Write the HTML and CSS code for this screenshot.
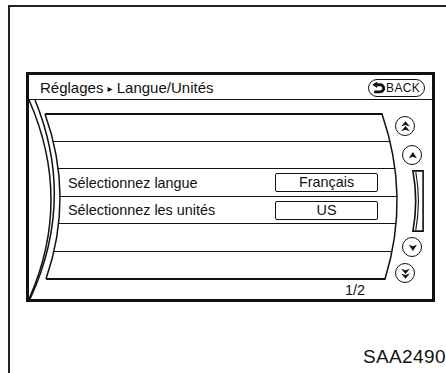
FILE: index.html
```
<!DOCTYPE html>
<html lang="fr">
<head>
    <meta charset="UTF-8">
    <meta name="viewport" content="width=device-width, initial-scale=1.0">
    <title>Réglages - Langue/Unités</title>
    <link rel="stylesheet" href="styles.css">
</head>
<body>
    <div class="figure">
        <div class="screen">
            <div class="screen-head">
                <span class="crumb">Réglages <span class="crumb-sep">▸</span> Langue/Unités</span>
                <span class="back-btn">
                    <svg class="back-icon" viewBox="0 0 12 11" width="13" height="12">
                        <path d="M4 2.5 H7.5 A3.3 3.3 0 0 1 7.5 9.1 H2" fill="none" stroke="#111" stroke-width="2.6"/>
                        <path d="M0.3 2.5 L4.8 -0.5 L4.8 5.5 Z" fill="#111"/>
                    </svg>BACK
                </span>
            </div>

            <div class="screen-body">
                <div class="gutter"></div>

                <div class="list-col">
                    <div class="list">
                        <div class="row"></div>
                        <div class="row"></div>
                        <div class="row">
                            <span class="row-label">Sélectionnez langue</span>
                            <span class="row-value">Français</span>
                        </div>
                        <div class="row">
                            <span class="row-label">Sélectionnez les unités</span>
                            <span class="row-value">US</span>
                        </div>
                        <div class="row"></div>
                        <div class="row"></div>
                    </div>
                    <div class="page-num">1/2</div>
                </div>

                <div class="scroll-col">
                    <span class="scroll-btn scroll-btn--outer">
                        <svg viewBox="0 0 10 10" width="11" height="11">
                            <path d="M5 0.3 L9 5 L5 3.7 L1 5 Z M5 4.6 L9 9.3 L5 8 L1 9.3 Z" fill="#111"/>
                        </svg>
                    </span>
                    <span class="scroll-btn scroll-btn--inner gap-up">
                        <svg viewBox="0 0 10 10" width="11" height="11">
                            <path d="M5.4 1.8 L9 7.6 L5.2 6.2 L1.6 7.4 Z" fill="#111"/>
                        </svg>
                    </span>
                    <svg class="scroll-track" viewBox="0 0 12 62" width="12" height="62">
                        <path d="M0.9 0.9 H11.1 V61.1 H0.9 Q6.5 31 0.9 0.9 Z" fill="none" stroke="#111" stroke-width="1.6"/>
                        <path d="M3.8 2 Q9 31 3.8 60" fill="none" stroke="#111" stroke-width="1.1"/>
                    </svg>
                    <span class="scroll-btn scroll-btn--inner gap-down">
                        <svg viewBox="0 0 10 10" width="11" height="11">
                            <path d="M5.4 8.2 L9 2.4 L5.2 3.8 L1.6 2.6 Z" fill="#111"/>
                        </svg>
                    </span>
                    <span class="scroll-btn scroll-btn--outer gap-last">
                        <svg viewBox="0 0 10 10" width="11" height="11">
                            <path d="M5 9.7 L9 5 L5 6.3 L1 5 Z M5 5.4 L9 0.7 L5 2 L1 0.7 Z" fill="#111"/>
                        </svg>
                    </span>
                </div>

                <!-- curved bezel drawn over the list -->
                <svg class="bezel" viewBox="29 100 403 199">
                    <path d="M29 100 Q73 200 29 299" />
                    <path d="M35 100 Q76 200 30 299" />
                    <path d="M45 114 Q74.5 196.5 46 279" />
                    <path d="M382 114 Q410.5 196.5 385 279" />
                </svg>
            </div>
        </div>

        <div class="fig-code">SAA2490</div>
    </div>
</body>
</html>
```

FILE: styles.css
```
body {
    margin: 0;
    font-family: "Liberation Sans", Arial, sans-serif;
    color: #111;
    background-color: #fff;
}
.figure {
    margin: 5px 0 0 8px;
    height: 368px;
    box-sizing: border-box;
    border-top: 2px solid #222;
    border-left: 2px solid #222;
    padding: 65px 0 0 16px;
    overflow: hidden;
}
.screen {
    width: 409px;
    height: 230px;
    box-sizing: border-box;
    border: 3px solid #111;
    display: flex;
    flex-direction: column;
}
.screen-head {
    flex: none;
    height: 25px;
    box-sizing: border-box;
    border-bottom: 1px solid #111;
    display: flex;
    align-items: center;
    justify-content: space-between;
    padding: 1px 7px 0 11px;
}
.crumb {
    font-size: 15px;
    line-height: 17px;
}
.crumb-sep {
    font-family: "DejaVu Sans", sans-serif;
    font-size: 10px;
    vertical-align: 1px;
}
.back-btn {
    display: flex;
    align-items: center;
    gap: 1px;
    height: 18px;
    box-sizing: border-box;
    border: 1.6px solid #111;
    border-radius: 9px;
    padding: 0 4px 0 3px;
    font-size: 12px;
    letter-spacing: 0.3px;
}
.screen-body {
    position: relative;
    flex: 1;
    display: grid;
    grid-template-columns: 15px 354px 1fr;
}
.list-col {
    padding-top: 13px;
}
.list {
    height: 167px;
    box-sizing: border-box;
    display: grid;
    grid-template-rows: repeat(6, 1fr);
    border-bottom: 2px solid #111;
    clip-path: path('M1 0 L338.5 0 Q367 83.5 341.5 167 L2 167 Q30 83.5 1 0 Z');
}
.row {
    border-top: 1px solid #111;
    display: flex;
    align-items: center;
    justify-content: space-between;
    padding: 1px 20px 0 24px;
}
.row:first-child {
    border-top-width: 2px;
}
.row-label {
    font-size: 14.4px;
    line-height: 16px;
}
.row-value {
    width: 103px;
    height: 19px;
    box-sizing: border-box;
    border: 1.5px solid #111;
    border-radius: 2px;
    text-align: center;
    font-size: 14.4px;
    line-height: 16px;
}
.page-num {
    margin-top: 2px;
    padding-right: 33px;
    text-align: right;
    font-size: 14.4px;
    line-height: 16px;
}
.scroll-col {
    display: flex;
    flex-direction: column;
    align-items: flex-start;
    padding-top: 16px;
}
.scroll-btn {
    width: 20px;
    height: 20px;
    box-sizing: border-box;
    border: 1.8px solid #111;
    border-radius: 50%;
    display: flex;
    align-items: center;
    justify-content: center;
}
.scroll-btn--outer {
    margin-left: -3px;
}
.scroll-btn--inner {
    margin-left: 4px;
}
.scroll-track {
    display: block;
    margin: 5px 0 0 14px;
}
.gap-up {
    margin-top: 9px;
}
.gap-down {
    margin-top: 5px;
}
.gap-last {
    margin-top: 6px;
}
.bezel {
    position: absolute;
    top: 0;
    left: 0;
    width: 100%;
    height: 100%;
    pointer-events: none;
    fill: none;
    stroke: #111;
    stroke-width: 1.5;
}
.fig-code {
    margin-top: 44px;
    text-align: right;
    font-size: 19px;
    line-height: 22px;
    letter-spacing: 0.4px;
}
```
